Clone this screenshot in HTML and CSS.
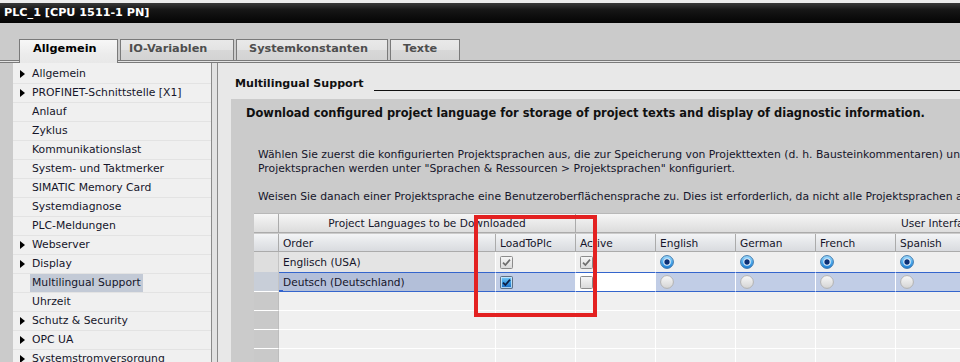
FILE: index.html
```html
<!DOCTYPE html>
<html lang="de">
<head>
<meta charset="utf-8">
<title>PLC_1 [CPU 1511-1 PN]</title>
<link rel="stylesheet" href="styles.css">
</head>
<body>
<div class="titlebar">PLC_1 [CPU 1511-1 PN]</div>

<div class="tabbar">
  <div class="tab active tab-allg">Allgemein</div>
  <div class="tab tab-io">IO-Variablen</div>
  <div class="tab tab-sys">Systemkonstanten</div>
  <div class="tab tab-txt">Texte</div>
</div>

<div class="main">
  <div class="tree">
    <div class="item"><span class="arrow"></span><span class="label">Allgemein</span></div>
    <div class="item"><span class="arrow"></span><span class="label">PROFINET-Schnittstelle [X1]</span></div>
    <div class="item"><span class="noarrow"></span><span class="label">Anlauf</span></div>
    <div class="item"><span class="noarrow"></span><span class="label">Zyklus</span></div>
    <div class="item"><span class="noarrow"></span><span class="label">Kommunikationslast</span></div>
    <div class="item"><span class="noarrow"></span><span class="label">System- und Taktmerker</span></div>
    <div class="item"><span class="noarrow"></span><span class="label">SIMATIC Memory Card</span></div>
    <div class="item"><span class="noarrow"></span><span class="label">Systemdiagnose</span></div>
    <div class="item"><span class="noarrow"></span><span class="label">PLC-Meldungen</span></div>
    <div class="item"><span class="arrow"></span><span class="label">Webserver</span></div>
    <div class="item"><span class="arrow"></span><span class="label">Display</span></div>
    <div class="item"><span class="noarrow"></span><span class="label selected">Multilingual Support</span></div>
    <div class="item"><span class="noarrow"></span><span class="label">Uhrzeit</span></div>
    <div class="item"><span class="arrow"></span><span class="label">Schutz &amp; Security</span></div>
    <div class="item"><span class="arrow"></span><span class="label">OPC UA</span></div>
    <div class="item"><span class="arrow"></span><span class="label">Systemstromversorgung</span></div>
  </div>

  <div class="splitter"></div>

  <div class="content">
    <div class="heading"><span>Multilingual Support</span><span class="rule"></span></div>

    <div class="box">
      <div class="box-title">Download configured project language for storage of project texts and display of diagnostic information.</div>

      <div class="desc">
        <p>Wählen Sie zuerst die konfigurierten Projektsprachen aus, die zur Speicherung von Projekttexten (d. h. Bausteinkommentaren) und zur Anzeige von Diagnoseinformationen in die CPU geladen werden sollen.<br>Projektsprachen werden unter "Sprachen &amp; Ressourcen &gt; Projektsprachen" konfiguriert.</p>
        <p>Weisen Sie danach einer Projektsprache eine Benutzeroberflächensprache zu. Dies ist erforderlich, da nicht alle Projektsprachen auf der CPU angezeigt werden können.</p>
      </div>

      <div class="grid">
        <div class="row hrow h1">
          <div class="cell rh"></div>
          <div class="cell span-proj">Project Languages to be Downloaded</div>
          <div class="cell span-ui">User Interface Languages</div>
        </div>
        <div class="row hrow h2">
          <div class="cell rh"></div>
          <div class="cell c-order">Order</div>
          <div class="cell c80">LoadToPlc</div>
          <div class="cell c80">Active</div>
          <div class="cell c80">English</div>
          <div class="cell c80">German</div>
          <div class="cell c80">French</div>
          <div class="cell c80">Spanish</div>
        </div>
        <div class="row drow r1">
          <div class="cell rh"></div>
          <div class="cell c-order">Englisch (USA)</div>
          <div class="cell c80"><svg class="chk" width="13" height="13" viewBox="0 0 13 13"><rect x="0.5" y="0.5" width="12" height="12" rx="1" fill="url(#gGray)" stroke="#8c8c8c"/><path d="M3 6.6 L5.4 9 L10 3.6" fill="none" stroke="#6e6e6e" stroke-width="1.7"/></svg></div>
          <div class="cell c80"><svg class="chk" width="13" height="13" viewBox="0 0 13 13"><rect x="0.5" y="0.5" width="12" height="12" rx="1" fill="url(#gGray)" stroke="#8c8c8c"/><path d="M3 6.6 L5.4 9 L10 3.6" fill="none" stroke="#6e6e6e" stroke-width="1.7"/></svg></div>
          <div class="cell c80"><svg class="rad" width="14" height="14" viewBox="0 0 14 14"><circle cx="7" cy="7" r="6.4" fill="url(#gBlue)" stroke="#3f78ad"/><circle cx="7" cy="7" r="3.2" fill="#0c2f74" stroke="#eaf6ff" stroke-width="1.1"/></svg></div>
          <div class="cell c80"><svg class="rad" width="14" height="14" viewBox="0 0 14 14"><circle cx="7" cy="7" r="6.4" fill="url(#gBlue)" stroke="#3f78ad"/><circle cx="7" cy="7" r="3.2" fill="#0c2f74" stroke="#eaf6ff" stroke-width="1.1"/></svg></div>
          <div class="cell c80"><svg class="rad" width="14" height="14" viewBox="0 0 14 14"><circle cx="7" cy="7" r="6.4" fill="url(#gBlue)" stroke="#3f78ad"/><circle cx="7" cy="7" r="3.2" fill="#0c2f74" stroke="#eaf6ff" stroke-width="1.1"/></svg></div>
          <div class="cell c80"><svg class="rad" width="14" height="14" viewBox="0 0 14 14"><circle cx="7" cy="7" r="6.4" fill="url(#gBlue)" stroke="#3f78ad"/><circle cx="7" cy="7" r="3.2" fill="#0c2f74" stroke="#eaf6ff" stroke-width="1.1"/></svg></div>
        </div>
        <div class="row drow r2">
          <div class="cell rh"></div>
          <div class="cell c-order">Deutsch (Deutschland)<span class="marker"></span></div>
          <div class="cell c80"><svg class="chk" width="13" height="13" viewBox="0 0 13 13"><rect x="0.5" y="0.5" width="12" height="12" rx="1" fill="url(#gChk)" stroke="#5f6f82"/><rect x="1.5" y="1.5" width="10" height="10" fill="none" stroke="#cfe9fb" stroke-width="0.8"/><path d="M3 6.6 L5.4 9 L10 3.6" fill="none" stroke="#0d1f45" stroke-width="1.8"/></svg></div>
          <div class="cell c80 editing"><svg class="chk" width="13" height="13" viewBox="0 0 13 13"><rect x="0.5" y="0.5" width="12" height="12" rx="1" fill="url(#gGray)" stroke="#8c8c8c"/></svg></div>
          <div class="cell c80"><svg class="rad" width="14" height="14" viewBox="0 0 14 14"><circle cx="7" cy="7" r="6.4" fill="url(#gOff)" stroke="#b2b2b2"/></svg></div>
          <div class="cell c80"><svg class="rad" width="14" height="14" viewBox="0 0 14 14"><circle cx="7" cy="7" r="6.4" fill="url(#gOff)" stroke="#b2b2b2"/></svg></div>
          <div class="cell c80"><svg class="rad" width="14" height="14" viewBox="0 0 14 14"><circle cx="7" cy="7" r="6.4" fill="url(#gOff)" stroke="#b2b2b2"/></svg></div>
          <div class="cell c80"><svg class="rad" width="14" height="14" viewBox="0 0 14 14"><circle cx="7" cy="7" r="6.4" fill="url(#gOff)" stroke="#b2b2b2"/></svg></div>
        </div>
        <div class="row erow">
          <div class="cell rh"></div><div class="cell c-order"></div><div class="cell c80"></div><div class="cell c80"></div><div class="cell c80"></div><div class="cell c80"></div><div class="cell c80"></div><div class="cell c80"></div>
        </div>
        <div class="row erow">
          <div class="cell rh"></div><div class="cell c-order"></div><div class="cell c80"></div><div class="cell c80"></div><div class="cell c80"></div><div class="cell c80"></div><div class="cell c80"></div><div class="cell c80"></div>
        </div>
        <div class="row erow">
          <div class="cell rh"></div><div class="cell c-order"></div><div class="cell c80"></div><div class="cell c80"></div><div class="cell c80"></div><div class="cell c80"></div><div class="cell c80"></div><div class="cell c80"></div>
        </div>
        <div class="row erow">
          <div class="cell rh"></div><div class="cell c-order"></div><div class="cell c80"></div><div class="cell c80"></div><div class="cell c80"></div><div class="cell c80"></div><div class="cell c80"></div><div class="cell c80"></div>
        </div>

        <div class="callout"></div>
      </div>
    </div>
  </div>
</div>

<svg class="defs" width="0" height="0" aria-hidden="true">
  <defs>
    <linearGradient id="gGray" x1="0" y1="0" x2="0" y2="1"><stop offset="0" stop-color="#f7f7f7"/><stop offset="1" stop-color="#d9d9d9"/></linearGradient>
    <linearGradient id="gChk" x1="0" y1="0" x2="0" y2="1"><stop offset="0" stop-color="#7fd0fa"/><stop offset="0.5" stop-color="#3c9be0"/><stop offset="1" stop-color="#1564c0"/></linearGradient>
    <linearGradient id="gBlue" x1="0" y1="0" x2="0" y2="1"><stop offset="0" stop-color="#a6e0ff"/><stop offset="0.55" stop-color="#48a8ec"/><stop offset="1" stop-color="#1e7ad0"/></linearGradient>
    <linearGradient id="gOff" x1="0" y1="0" x2="0" y2="1"><stop offset="0" stop-color="#f8f8f8"/><stop offset="1" stop-color="#d4d4d4"/></linearGradient>
  </defs>
</svg>
</body>
</html>
```

FILE: styles.css
```css
* { box-sizing: border-box; }

html, body {
  margin: 0;
  padding: 0;
}

body {
  width: 960px;
  height: 362px;
  overflow: hidden;
  background: #cbcbcb;
  font-family: "DejaVu Sans", "Noto Sans", sans-serif;
  font-size: 10.6px;
  color: #15152a;
}

/* ---------- title bar ---------- */
.titlebar {
  height: 23px;
  border-top: 3px solid #ededed;
  background: linear-gradient(#3a3a3a, #161616 35%, #040404);
  color: #ffffff;
  font-weight: bold;
  font-size: 11.2px;
  line-height: 20px;
  padding-left: 4px;
  white-space: nowrap;
}

/* ---------- tabs ---------- */
.tabbar {
  margin-top: 16px;
  height: 24px;
  display: flex;
  align-items: flex-start;
  padding-left: 19px;
  background: linear-gradient(to bottom,
    transparent 21px,
    #7a7a7a 21px, #7a7a7a 22px,
    #e3e3e3 22px, #e3e3e3 23px,
    #7a7a7a 23px, #7a7a7a 24px);
}

.tab {
  height: 22px;
  margin-right: 2px;
  border: 1px solid #7a7a7a;
  background: linear-gradient(#e9e9e9, #e3e3e3 50%, #d8d8d8 50%, #d3d3d3);
  font-weight: bold;
  font-size: 11.3px;
  line-height: 18px;
  color: #4e4e4e;
  padding-left: 12px;
  white-space: nowrap;
}

.tab.active {
  height: 24px;
  border-bottom: none;
  background: linear-gradient(#f7f7f7, #ececec 60%, #e8e8e8);
  color: #000000;
  padding-left: 13px;
}

.tab-allg { width: 99px; }
.tab-io { width: 114px; padding-left: 8px; }
.tab-sys { width: 152px; }
.tab-txt { width: 70px; }

/* ---------- main ---------- */
.main {
  display: flex;
  height: 299px;
  padding-left: 13px;
}

.tree {
  width: 198px;
  flex: none;
  background: #f0f0f0;
  padding-top: 2px;
  font-size: 10.8px;
}

.item {
  height: 19px;
  border-bottom: 1px solid #e3e3e3;
  display: flex;
  align-items: center;
  padding-left: 7px;
  white-space: nowrap;
}

.arrow {
  width: 10px;
  height: 8px;
  flex: none;
}
.arrow::before {
  content: "";
  display: block;
  width: 0;
  height: 0;
  border-left: 5px solid #000;
  border-top: 4px solid transparent;
  border-bottom: 4px solid transparent;
}

.noarrow {
  width: 10px;
  flex: none;
}

.label {
  padding: 0 2px;
  line-height: 18px;
}

.label.selected {
  background: #c3cad6;
}

.splitter {
  width: 7px;
  flex: none;
  border-left: 1px solid #8a8a8a;
  border-right: 1px solid #8a8a8a;
  background: #e2e2e2;
}

.content {
  flex: 1;
  min-width: 0;
  background: #e8e8e8;
  overflow: hidden;
}

.heading {
  display: flex;
  align-items: flex-end;
  height: 14px;
  margin-top: 14px;
  padding-left: 17px;
  font-weight: bold;
  font-size: 11.1px;
  line-height: 14px;
  color: #111;
  white-space: nowrap;
}

.rule {
  flex: 1;
  border-bottom: 1px solid #111;
  margin-left: 10px;
}

.box {
  margin-top: 8px;
  margin-left: 13px;
  height: 263px;
  background: #cbcbcb;
  padding-top: 6px;
  padding-left: 15px;
  white-space: nowrap;
  overflow: hidden;
}

.box-title {
  font-weight: bold;
  font-size: 11.45px;
  line-height: 16px;
  color: #111;
}

.desc {
  margin-top: 27px;
  padding-left: 12px;
  line-height: 14px;
  font-size: 10.8px;
}

.desc p { margin: 0; }
.desc p + p { margin-top: 14px; }

/* ---------- grid ---------- */
.grid {
  position: relative;
  margin-top: 9px;
  margin-left: 8px;
  width: 760px;
}

.row {
  display: flex;
}

.cell {
  flex: none;
  height: 100%;
  padding-left: 4px;
  border-right: 1px solid #ffffff;
  display: flex;
  align-items: center;
  white-space: nowrap;
  overflow: hidden;
}

.rh { width: 25px; padding: 0; }
.c-order { width: 217px; }
.c80 { width: 80px; }

/* header rows */
.hrow .cell {
  background: linear-gradient(#f6f6f6, #e9e9e9 50%, #dcdcdc);
  border-right: 1px solid #ababab;
}
.h1 {
  height: 20px;
  border-top: 1px solid #b8b8b8;
  border-bottom: 1px solid #ababab;
}
.h2 {
  height: 19px;
  border-bottom: 1px solid #ababab;
  padding-top: 1px;
}
.h2 .cell {
  background: linear-gradient(#f3f4f6, #e5e7ea 50%, #d9dbdf);
}

.span-proj {
  width: 297px;
  justify-content: center;
  padding-left: 0;
}

.span-ui {
  width: 420px;
  padding-left: 325px;
}

/* data rows */
.drow .cell { background: #efefef; }
.drow .rh { background: #dedede; border-right-color: #c4c4c4; }

.r1 { height: 20px; }
.r1 .c-order { background: #e4e4e4; }

.r2 {
  height: 20px;
  background: #c8ced8;
}
.r2 .cell {
  background: #c1cde6;
  border-top: 1px solid #3465cc;
  border-bottom: 1px solid #3465cc;
}
.r2 .rh {
  background: #c8ced8;
  border-top: none;
  border-bottom: 1px solid #ffffff;
}
.r2 .c-order {
  background: #b3bfd9;
  position: relative;
}
.r2 .editing { background: #ffffff; }

.marker {
  position: absolute;
  left: 0;
  bottom: -3px;
  width: 4px;
  height: 4px;
  background: #2f62d2;
}

/* empty rows */
.erow {
  height: 19px;
}
.erow .cell {
  background: #f0f0f0;
  border-bottom: 1px solid #ffffff;
}
.erow .rh {
  background: #c9c9c9;
  border-right-color: #bdbdbd;
}

.chk, .rad { display: block; flex: none; }

/* annotation */
.callout {
  position: absolute;
  left: 220px;
  top: 2px;
  width: 123px;
  height: 102px;
  border: 4px solid #e32121;
}

.defs {
  display: block;
  width: 0;
  height: 0;
}
```
